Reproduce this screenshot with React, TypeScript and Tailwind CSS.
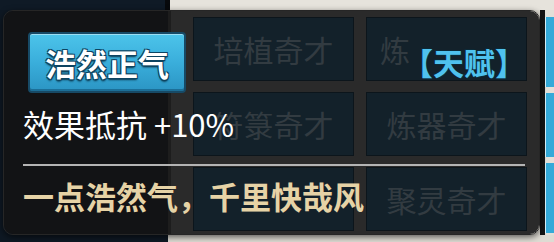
import React from 'react';

const cjk = "font-['Noto_Sans_CJK_SC','Noto_Sans',sans-serif]";

const tiles = ['培植奇才', '炼', '符箓奇才', '炼器奇才', '', '聚灵奇才'];

export default function App() {
  return (
    <div className={`w-[554px] h-[242px] overflow-hidden flex flex-col bg-[#0e1823] ${cjk}`}>
      {/* top strip of the scene */}
      <div className="h-[10px] flex">
        <div className="w-[165px] bg-[#0f1a26]" />
        <div className="w-[5px] bg-[#07090c]" />
        <div className="flex-1 bg-[#e6e3dc]" />
      </div>

      {/* middle row: tooltip box */}
      <div className="h-[225px] flex bg-[linear-gradient(90deg,#0e1823_168px,#dedbd3_168px)]">
        <div className="w-[3px]" />
        <div className="relative w-[537px] rounded-[10px] overflow-hidden flex border border-[#262626] shadow-[0_2px_6px_rgba(0,0,0,0.6)]">
          <div className="w-[164px] bg-[#121315]" />
          <div className="flex-1 bg-[#2a2a2a] border-l-[3px] border-[#1d1d1d] pl-[22px] pt-[6px]">
            <div className="grid grid-cols-[161px_161px] auto-rows-[64px] gap-x-[12px] gap-y-[11px]">
              {tiles.map((t, i) => (
                <div
                  key={i}
                  className={`bg-[#13212a] border border-[#0c151b] flex items-center text-[30px] text-[#323b41] leading-none ${
                    i === 1 ? 'justify-start pl-[13px]' : 'justify-center'
                  }`}
                >
                  {t}
                </div>
              ))}
            </div>
          </div>

          {/* tooltip content over the talent tiles */}
          <div className="absolute inset-0 flex flex-col pl-[19px] pr-[13px]">
            <div className="flex items-center justify-between pt-[21px]">
              <div className="ml-[5px] w-[158px] h-[61px] rounded-[4px] border-2 border-[#174a66] bg-[linear-gradient(180deg,#4cc4ea_0%,#3aaedb_50%,#2b95c4_100%)] shadow-[inset_0_1px_0_rgba(255,255,255,0.45),inset_0_-2px_0_rgba(0,40,70,0.35)] flex items-center justify-center">
                <span className="text-[31px] font-bold text-white leading-none [text-shadow:1px_1px_0_#0d4461,-1px_-1px_0_#0d4461,1px_-1px_0_#0d4461,-1px_1px_0_#0d4461,0_2px_2px_#0a3348]">
                  浩然正气
                </span>
              </div>
              <span className="text-[31px] font-bold text-[#4fc2ee] leading-none mt-[-2px] [text-shadow:1px_1px_0_#0b2a38,-1px_-1px_0_#0b2a38]">
                【天赋】
              </span>
            </div>
            <div className="mt-[13px] text-[31px] text-white leading-[36px]">效果抵抗 +10%</div>
            <div className="mt-[22px] h-[2px] w-[502px] bg-[#b4b4b4]" />
            <div className="mt-[12px] text-[31px] font-bold text-[#e6d3a6] leading-[36px]">
              一点浩然气，千里快哉风
            </div>
          </div>
        </div>
        <div className="w-[5px] bg-[#141414]" />
        <div className="w-[9px] flex flex-col gap-[6px] pt-[7px] pb-[2px] bg-[#e2dfd8]">
          <div className="h-[70px] bg-[#34a9d8] border-l border-[#d8f2fb]" />
          <div className="h-[64px] bg-[#34a9d8] border-l border-[#d8f2fb]" />
          <div className="flex-1 bg-[#34a9d8] border-l border-[#d8f2fb]" />
        </div>
      </div>

      {/* bottom strip */}
      <div className="flex-1 flex">
        <div className="w-[168px] bg-[#0e1823]" />
        <div className="flex-1 bg-[#dedbd3]" />
      </div>
    </div>
  );
}
